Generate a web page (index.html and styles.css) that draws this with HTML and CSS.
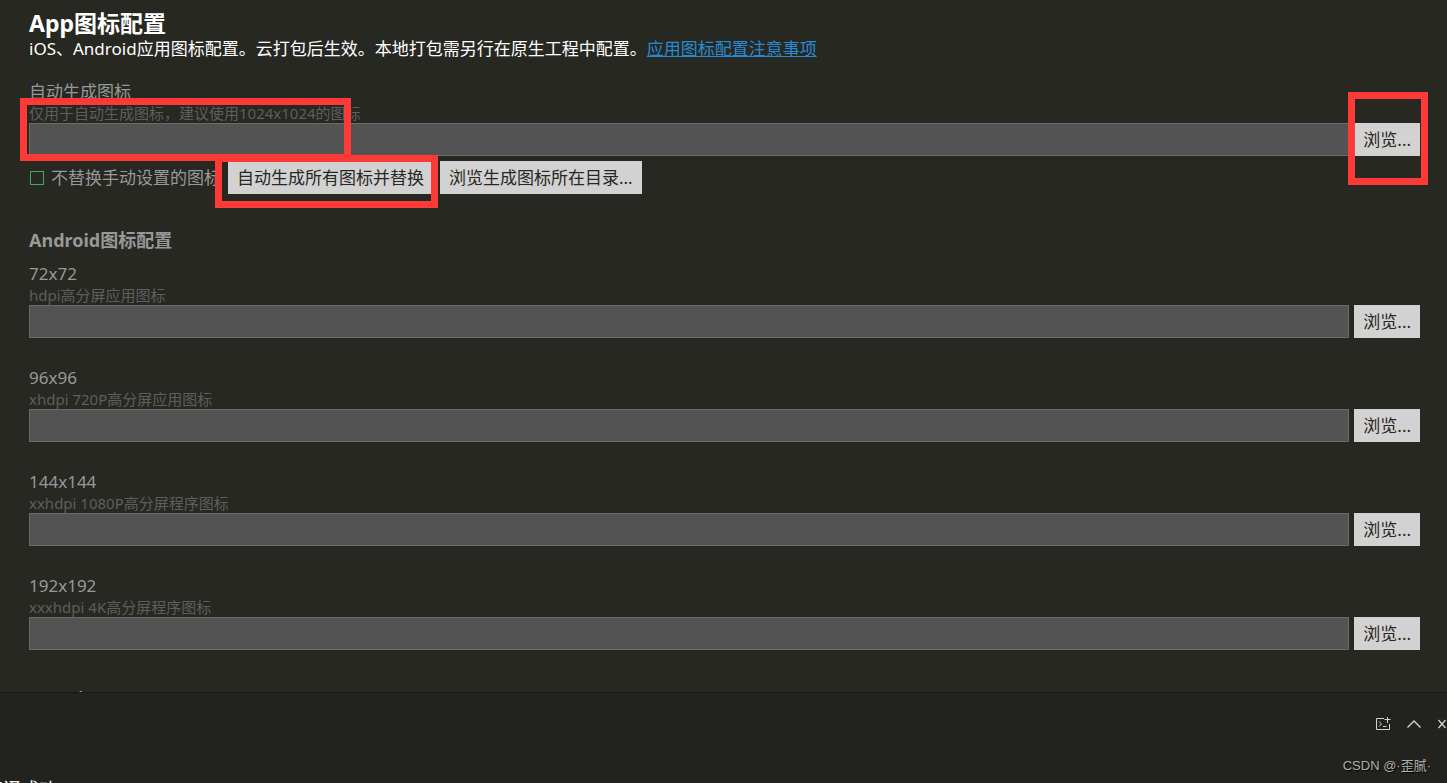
FILE: index.html
```html
<!DOCTYPE html>
<html lang="zh-CN">
<head>
    <meta charset="UTF-8">
    <title>App图标配置</title>
    <link rel="stylesheet" href="styles.css">
</head>
<body>
    <main class="settings">
        <h1>App图标配置</h1>
        <p class="intro">iOS、Android应用图标配置。云打包后生效。本地打包需另行在原生工程中配置。<a href="#">应用图标配置注意事项</a></p>

        <section class="generate">
            <div class="field">
                <label for="auto-icon">自动生成图标</label>
                <p class="hint">仅用于自动生成图标，建议使用1024x1024的图标</p>
                <div class="picker">
                    <input type="text" id="auto-icon">
                    <span class="marked">
                        <button type="button">浏览...</button>
                        <span class="mark mark-browse"></span>
                    </span>
                </div>
            </div>
            <div class="actions">
                <label class="keep"><input type="checkbox">不替换手动设置的图标</label>
                <span class="marked">
                    <button type="button">自动生成所有图标并替换</button>
                    <span class="mark mark-replace"></span>
                </span>
                <button type="button">浏览生成图标所在目录...</button>
            </div>
            <span class="mark mark-path"></span>
        </section>

        <section class="platform">
            <h2>Android图标配置</h2>
            <div class="field">
                <label for="icon-72">72x72</label>
                <p class="hint">hdpi高分屏应用图标</p>
                <div class="picker">
                    <input type="text" id="icon-72">
                    <button type="button">浏览...</button>
                </div>
            </div>
            <div class="field">
                <label for="icon-96">96x96</label>
                <p class="hint">xhdpi 720P高分屏应用图标</p>
                <div class="picker">
                    <input type="text" id="icon-96">
                    <button type="button">浏览...</button>
                </div>
            </div>
            <div class="field">
                <label for="icon-144">144x144</label>
                <p class="hint">xxhdpi 1080P高分屏程序图标</p>
                <div class="picker">
                    <input type="text" id="icon-144">
                    <button type="button">浏览...</button>
                </div>
            </div>
            <div class="field">
                <label for="icon-192">192x192</label>
                <p class="hint">xxxhdpi 4K高分屏程序图标</p>
                <div class="picker">
                    <input type="text" id="icon-192">
                    <button type="button">浏览...</button>
                </div>
            </div>
        </section>

        <section class="platform">
            <h2>iOS图标配置</h2>
        </section>
    </main>

    <footer class="console">
        <div class="tools">
            <button type="button" class="tool" aria-label="新建终端">
                <svg width="16" height="16" viewBox="0 0 16 16" fill="none" stroke="#d4d4d0">
                    <path d="M9 2.5H1.5v11h13V8M12.5 1v6M9.5 3.5h6M4 5.5L6.5 8 4 10.5M8 10.5h3.5"/>
                </svg>
            </button>
            <button type="button" class="tool" aria-label="展开">
                <svg width="16" height="16" viewBox="0 0 16 16" fill="none" stroke="#d4d4d0" stroke-width="1.4">
                    <path d="M1.5 11.5L8 5l6.5 6.5"/>
                </svg>
            </button>
            <button type="button" class="tool" aria-label="关闭">
                <svg width="16" height="16" viewBox="0 0 16 16" fill="none" stroke="#d4d4d0" stroke-width="1.3">
                    <path d="M4.5 4l7 8M11.5 4l-7 8"/>
                </svg>
            </button>
        </div>
        <p class="log">编译成功</p>
        <span class="watermark">CSDN @·歪腻·</span>
    </footer>
</body>
</html>
```
FILE: styles.css
```css
* {
    box-sizing: border-box;
}

body {
    margin: 0;
    height: 100vh;
    display: flex;
    flex-direction: column;
    overflow: hidden;
    background-color: #272822;
    color: #989898;
    font-family: "Noto Sans", "Noto Sans CJK SC", sans-serif;
    font-size: 17px;
    line-height: 22px;
}

h1, h2, p {
    margin: 0;
}

.settings {
    flex: 1;
    min-height: 0;
    overflow: hidden;
    padding: 8px 27px 0 29px;
}

h1 {
    color: #ffffff;
    font-size: 23px;
    line-height: 30px;
}

h2 {
    font-size: 18px;
    line-height: 24px;
    margin-bottom: 11px;
}

.intro {
    color: #ffffff;
}

.intro a {
    color: #268bd2;
}

.generate {
    position: relative;
    margin-top: 21px;
}

.platform {
    margin-top: 34px;
}

.platform + .platform {
    margin-top: 38px;
}

.field label {
    display: block;
}

.field + .field {
    margin-top: 29px;
}

.hint {
    color: #5e5e5e;
    font-size: 15px;
    line-height: 20px;
}

.picker {
    display: flex;
    gap: 5px;
}

.picker input {
    flex: 1;
    min-width: 0;
    height: 33px;
    padding: 0 8px;
    border: 1px solid #6b6b6b;
    background-color: #535353;
    color: #ffffff;
    font: inherit;
}

button {
    height: 33px;
    padding: 0 9px;
    border: 0;
    background-color: #d2d2d2;
    color: #272822;
    font: inherit;
    white-space: nowrap;
}

.actions {
    display: flex;
    align-items: center;
    gap: 7px;
    margin-top: 5px;
}

.keep {
    display: flex;
    align-items: center;
    gap: 7px;
}

.keep input {
    appearance: none;
    width: 14px;
    height: 14px;
    margin: 0 0 0 1px;
    border: 1px solid #41a863;
}

/* Red outlines around the controls to use */
.marked {
    position: relative;
    display: flex;
}

.mark {
    position: absolute;
    border: 7px solid #fc3a38;
    pointer-events: none;
}

.mark-path {
    top: 17px;
    left: -9px;
    width: 331px;
    height: 63px;
}

.mark-browse {
    top: -31px;
    right: -8px;
    bottom: -29px;
    left: -6px;
}

.mark-replace {
    top: -6px;
    right: -5px;
    bottom: -14px;
    left: -13px;
}

/* Bottom console */
.console {
    position: relative;
    height: 91px;
    overflow: hidden;
    border-top: 1px solid #171815;
    background-color: #22231e;
}

.tools {
    display: flex;
    justify-content: flex-end;
    gap: 15px;
    margin-right: -3px;
    padding-top: 23px;
}

.tool {
    display: flex;
    width: 16px;
    height: 16px;
    padding: 0;
    background: none;
}

.tool:last-child {
    margin-left: -3px;
}

.log {
    margin: 46px 0 0 -15px;
    color: #ffffff;
    font-size: 18px;
}

.watermark {
    position: absolute;
    right: 16px;
    bottom: 6px;
    color: #b0b0ae;
    font-family: "Liberation Sans", "Noto Sans CJK SC", sans-serif;
    font-size: 13px;
    text-shadow: 1px 1px 1px #000000;
}
```
